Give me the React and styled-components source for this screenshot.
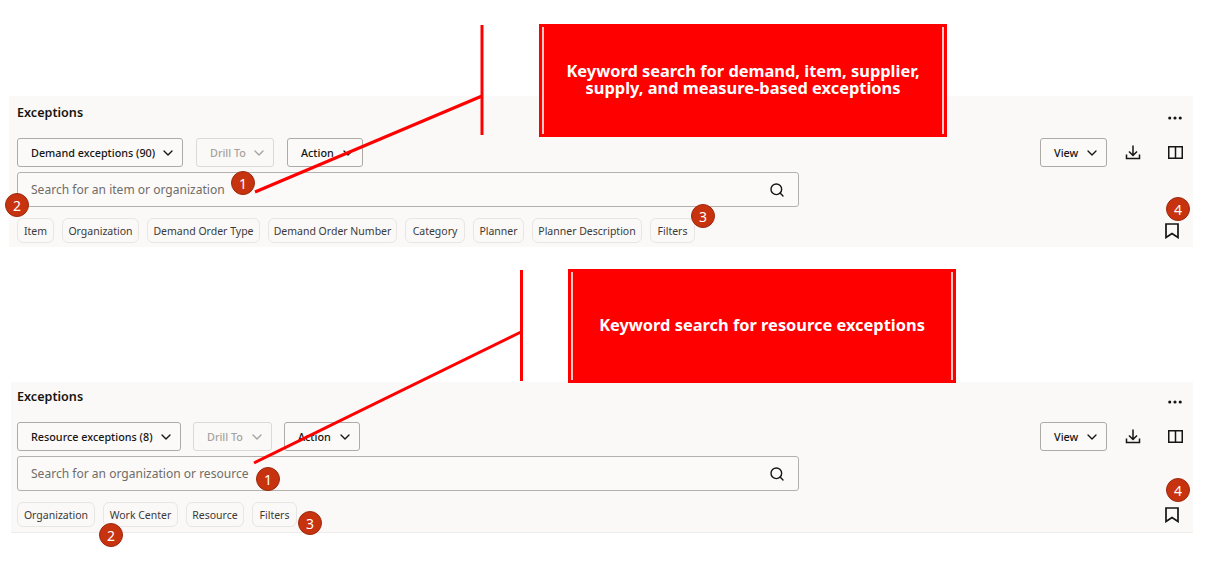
import React from "react";
import styled, { createGlobalStyle } from "styled-components";
import { ChevronDown, Search, Ellipsis } from "lucide-react";

const Global = createGlobalStyle`
  html, body { margin: 0; padding: 0; background: #fff; }
  body { font-family: "Noto Sans", "Open Sans", Arial, sans-serif; color: #161513; }
`;

const Page = styled.div`
  position: relative;
  width: 1228px;
  height: 565px;
  overflow: hidden;
  padding-top: 96px;
  box-sizing: border-box;
  background: #fff;
`;

const Panel = styled.section`
  box-sizing: border-box;
  height: ${p => p.$h}px;
  margin: ${p => p.$top}px 35px 0 ${p => p.$left}px;
  padding: ${p => p.$pt}px 0 0 ${p => 17 - p.$left}px;
  background: #faf9f7;
  ${p => p.$rule && "border-bottom: 1px solid #eeecea;"}
`;

const TitleRow = styled.div`
  display: flex;
  align-items: center;
  justify-content: space-between;
  height: 18px;
  padding-right: 9px;
`;

const Title = styled.h2`
  margin: 0;
  font-size: 12.6px;
  line-height: 18px;
  font-weight: 600;
  color: #161513;
`;

const MoreSlot = styled.span`
  display: flex;
  margin-top: 10px;
  color: #161513;
`;

const Toolbar = styled.div`
  display: flex;
  align-items: center;
  height: 29px;
  margin-top: ${p => p.$mt}px;
  padding-right: 9px;
`;

const Btn = styled.div`
  box-sizing: border-box;
  display: flex;
  align-items: center;
  justify-content: space-between;
  width: ${p => p.$w}px;
  height: 29px;
  margin-right: ${p => p.$mr || 0}px;
  padding: 0 6px 0 13px;
  border: 1px solid ${p => (p.$off ? "#dcdad6" : "#aeaba6")};
  border-radius: 3px;
  font-size: 10.8px;
  font-weight: 500;
  white-space: nowrap;
  color: ${p => (p.$off ? "#a5a3a0" : "#161513")};
  background: ${p => (p.$off ? "transparent" : "#fbfaf9")};
`;

const Spacer = styled.div`
  flex: 1;
`;

const IconSlot = styled.span`
  display: flex;
  justify-content: center;
  width: 18px;
  margin-left: ${p => p.$ml}px;
  color: #161513;
`;

const SearchBox = styled.div`
  box-sizing: border-box;
  display: flex;
  align-items: center;
  justify-content: space-between;
  width: 782px;
  height: 35px;
  margin-top: 5px;
  padding: 0 13px;
  border: 1px solid #b4b1ac;
  border-radius: 3px;
  background: #fbfaf9;
  font-size: 12.05px;
  color: #6f6c68;
`;

const ChipRow = styled.div`
  display: flex;
  align-items: center;
  gap: 8px;
  margin-top: ${p => p.$mt}px;
  padding-right: 14px;
`;

const Chip = styled.span`
  box-sizing: border-box;
  display: flex;
  align-items: center;
  justify-content: center;
  width: ${p => p.$w}px;
  height: 25px;
  border: 1px solid #e8e6e2;
  border-radius: 6px;
  font-size: 10.5px;
  color: #3c3a37;
  white-space: nowrap;
`;

const EndSlot = styled.span`
  display: flex;
  margin-left: auto;
  color: #161513;
`;

const Callout = styled.div`
  position: absolute;
  left: ${p => p.$x}px;
  top: ${p => p.$y}px;
  box-sizing: border-box;
  width: ${p => p.$w}px;
  height: ${p => p.$h}px;
  padding-bottom: ${p => p.$pb}px;
  display: flex;
  align-items: center;
  justify-content: center;
  text-align: center;
  background: #ff0000;
  color: #fff;
  font-size: 16.4px;
  line-height: 17px;
  font-weight: 700;
  &::before, &::after {
    content: "";
    position: absolute;
    top: 3px;
    bottom: 3px;
    width: 2px;
    background: #ffc4c4;
  }
  &::before { left: 3px; }
  &::after { right: 3px; }
`;

const Badge = styled.span`
  position: absolute;
  left: ${p => p.$x - 12}px;
  top: ${p => p.$y - 12}px;
  box-sizing: border-box;
  width: 24px;
  height: 24px;
  display: flex;
  align-items: center;
  justify-content: center;
  border-radius: 50%;
  background: #c7320f;
  border: 1px solid #9c2a10;
  color: #fff;
  font-size: 14px;
`;

const Leaders = styled.svg`
  position: absolute;
  left: 0;
  top: 0;
  pointer-events: none;
`;

const Chevron = () => <ChevronDown size={16} strokeWidth={2} />;

const DownloadIcon = () => (
  <svg width="16" height="15" viewBox="0 0 16 15" fill="none" stroke="currentColor" strokeWidth="1.5">
    <path d="M8 0.500V10M4 6.500L8 10.500L12 6.500" />
    <path d="M1.500 9.500V13.500H14.500V9.500" />
  </svg>
);

const ColumnsIcon = () => (
  <svg width="15" height="13" viewBox="0 0 15 13" fill="none" stroke="currentColor" strokeWidth="1.5">
    <path d="M0.750 0.750H14.250V12.250H0.750ZM7.500 0.750V12.250" />
  </svg>
);

const BookmarkIcon = () => (
  <svg width="14" height="16" viewBox="0 0 14 16" fill="none" stroke="currentColor" strokeWidth="1.7">
    <path d="M1 1H13V14.500L7 10.500L1 14.500Z" />
  </svg>
);

const FilterPanel = ({ left, top, pt, h, rule, mt, chipMt, main, mainW, mainMr, drillW, drillMr, actionW, placeholder, chips }) => (
  <Panel $left={left} $top={top} $pt={pt} $h={h} $rule={rule}>
    <TitleRow>
      <Title>Exceptions</Title>
      <MoreSlot><Ellipsis size={18} strokeWidth={2.2} /></MoreSlot>
    </TitleRow>
    <Toolbar $mt={mt}>
      <Btn $w={mainW} $mr={mainMr}>{main}<Chevron /></Btn>
      <Btn $w={drillW} $mr={drillMr} $off>Drill To<Chevron /></Btn>
      <Btn $w={actionW}>Action<Chevron /></Btn>
      <Spacer />
      <Btn $w={67}>View<Chevron /></Btn>
      <IconSlot $ml={17}><DownloadIcon /></IconSlot>
      <IconSlot $ml={24}><ColumnsIcon /></IconSlot>
    </Toolbar>
    <SearchBox>
      {placeholder}
      <Search size={16} strokeWidth={2.1} color="#161513" />
    </SearchBox>
    <ChipRow $mt={chipMt}>
      {chips.map(([label, w]) => <Chip key={label} $w={w}>{label}</Chip>)}
      <EndSlot><BookmarkIcon /></EndSlot>
    </ChipRow>
  </Panel>
);

export default function App() {
  return (
    <Page>
      <Global />
      <FilterPanel
        left={9} top={0} pt={8} h={151} mt={16} chipMt={11}
        main="Demand exceptions (90)" mainW={166} mainMr={13} drillW={78} drillMr={13} actionW={76}
        placeholder="Search for an item or organization"
        chips={[["Item", 37], ["Organization", 77], ["Demand Order Type", 113], ["Demand Order Number", 129], ["Category", 60], ["Planner", 51], ["Planner Description", 110], ["Filters", 45]]}
      />
      <FilterPanel
        left={11} top={135} pt={6} h={151} rule mt={16} chipMt={11}
        main="Resource exceptions (8)" mainW={164} mainMr={12} drillW={79} drillMr={12} actionW={76}
        placeholder="Search for an organization or resource"
        chips={[["Organization", 78], ["Work Center", 75], ["Resource", 58], ["Filters", 45]]}
      />
      <Leaders width="1228" height="565" viewBox="0 0 1228 565">
        <g stroke="#ff0000" strokeWidth="3" fill="none">
          <path d="M482 25V135" />
          <path d="M482 96L255 192" />
          <path d="M521.500 270V381" />
          <path d="M521 332L254 463" />
        </g>
      </Leaders>
      <Callout $x={539} $y={24} $w={408} $h={113} $pb={4}>
        Keyword search for demand, item, supplier,<br />supply, and measure-based exceptions
      </Callout>
      <Callout $x={568} $y={269} $w={388} $h={114} $pb={4}>
        Keyword search for resource exceptions
      </Callout>
      <Badge $x={243} $y={183}>1</Badge>
      <Badge $x={17} $y={205}>2</Badge>
      <Badge $x={703} $y={216}>3</Badge>
      <Badge $x={1178} $y={209}>4</Badge>
      <Badge $x={268} $y={479}>1</Badge>
      <Badge $x={111} $y={535}>2</Badge>
      <Badge $x={310} $y={523}>3</Badge>
      <Badge $x={1178} $y={490}>4</Badge>
    </Page>
  );
}
